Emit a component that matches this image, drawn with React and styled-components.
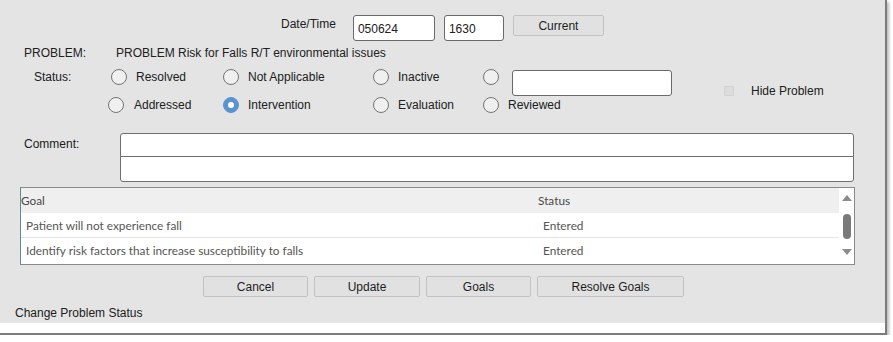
import React from 'react';
import styled, { createGlobalStyle } from 'styled-components';

const GlobalStyle = createGlobalStyle`
  html, body {
    margin: 0;
    padding: 0;
    background: #ffffff;
  }
  body {
    font-family: "Liberation Sans", Arial, sans-serif;
    font-size: 12px;
    color: #202020;
  }
`

const Window = styled.div`
  width: 885px;
  display: flex;
  flex-direction: column;
  border-right: 2px solid #7c7c7c;
  border-bottom: 2px solid #7c7c7c;
  box-shadow: 2px 2px 3px rgba(0, 0, 0, 0.28);
`

const Panel = styled.div`
  height: 323px;
  background: #e4e4e4;
  padding-top: 15px;
  box-sizing: border-box;
  display: flex;
  flex-direction: column;
`

const FooterStrip = styled.div`
  height: 10px;
  background: #ffffff;
`

const DateRow = styled.div`
  display: flex;
  align-items: flex-start;
  padding-left: 281px;
  height: 26px;
`

const Label = styled.span`
  line-height: 14px;
  margin-top: ${p => p.$top || 0}px;
  width: ${p => (p.$width ? `${p.$width}px` : 'auto')};
  flex-shrink: 0;
`

const TextBox = styled.div`
  box-sizing: border-box;
  width: ${p => p.$width}px;
  height: 26px;
  margin-left: ${p => p.$gap || 0}px;
  margin-top: ${p => p.$top || 0}px;
  background: #ffffff;
  border: 1px solid #6a6a6a;
  border-radius: 3px;
  padding: 6px 4px 0;
  line-height: 14px;
  font-size: 12px;
  flex-shrink: 0;
`

const Button = styled.div`
  box-sizing: border-box;
  width: ${p => p.$width}px;
  height: 21px;
  margin-left: ${p => p.$gap || 0}px;
  background: #e1e1e1;
  border: 1px solid #c2c2c2;
  border-radius: 2px;
  display: flex;
  align-items: center;
  justify-content: center;
  font-size: 12px;
  color: #1e1e1e;
  flex-shrink: 0;
`

const ProblemRow = styled.div`
  display: flex;
  padding-left: 24px;
  margin-top: 5px;
`

const StatusGrid = styled.div`
  display: grid;
  grid-template-columns: 111px 112px 150px 110px 241px auto;
  grid-template-rows: 28px 28px;
  margin-top: 3px;
`

const StatusLabel = styled.div`
  padding-left: 34px;
  display: flex;
  align-items: center;
`

const Option = styled.div`
  display: flex;
  align-items: center;
  gap: ${p => p.$gap || 9}px;
  margin-left: ${p => p.$shift || 0}px;
`

const Radio = styled.span`
  box-sizing: border-box;
  width: 16px;
  height: 16px;
  border-radius: 50%;
  border: 1px solid ${p => (p.$checked ? '#5a93cf' : '#747474')};
  background: ${p => (p.$checked ? '#5a93cf' : '#f0f0f0')};
  display: flex;
  align-items: center;
  justify-content: center;
  flex-shrink: 0;

  &::after {
    content: '';
    display: ${p => (p.$checked ? 'block' : 'none')};
    width: 6px;
    height: 6px;
    border-radius: 50%;
    background: #ffffff;
  }
`

const OtherCell = styled.div`
  display: flex;
  align-items: flex-start;
`

const HideCell = styled.div`
  grid-row: 1 / span 2;
  grid-column: 6;
  display: flex;
  align-items: center;
  gap: 17px;
`

const CheckBox = styled.span`
  width: 10px;
  height: 10px;
  box-sizing: border-box;
  background: #dcdcdc;
  border: 1px solid #d2d2d2;
  border-radius: 1px;
`

const CommentRow = styled.div`
  display: flex;
  padding-left: 24px;
  margin-top: 14px;
`

const CommentBoxes = styled.div`
  display: flex;
  flex-direction: column;
  width: 734px;
`

const CommentLine = styled.div`
  box-sizing: border-box;
  height: ${p => p.$height}px;
  margin-top: ${p => p.$top || 0}px;
  background: #ffffff;
  border: 1px solid #6e6e6e;
  border-radius: ${p => p.$radius};
`

const GoalTable = styled.div`
  box-sizing: border-box;
  width: 835px;
  height: 78px;
  margin: 5px 0 0 20px;
  border: 1px solid #8a8a8a;
  border-left-color: #5f8c94;
  background: #ffffff;
  display: flex;
  font-family: Lato, "Open Sans", sans-serif;
  font-size: 11.8px;
  color: #555555;
`

const TableBody = styled.div`
  flex: 1;
  display: flex;
  flex-direction: column;
`

const TableRow = styled.div`
  height: 25px;
  display: flex;
  align-items: center;
  background: ${p => (p.$head ? '#efefef' : '#ffffff')};
  border-bottom: ${p => (p.$line ? '1px solid #e6e6e6' : 'none')};
  box-sizing: border-box;
  color: ${p => (p.$head ? '#4a4a4a' : '#555555')};
`

const Cell = styled.div`
  width: ${p => (p.$width ? `${p.$width}px` : 'auto')};
  padding-left: ${p => p.$pad || 0}px;
  box-sizing: border-box;
  flex-shrink: 0;
`

const ScrollBar = styled.div`
  width: 15px;
  display: flex;
  flex-direction: column;
  align-items: center;
  background: #ffffff;
`

const Arrow = styled.span`
  width: 0;
  height: 0;
  border-left: 5px solid transparent;
  border-right: 5px solid transparent;
  ${p => (p.$down
    ? 'border-top: 6px solid #8c8c8c;'
    : 'border-bottom: 6px solid #8c8c8c;')}
  margin-top: ${p => p.$top}px;
`

const Thumb = styled.span`
  width: 8px;
  height: 25px;
  border-radius: 4px;
  background: #7a7a7a;
  margin-top: 13px;
`

const ButtonRow = styled.div`
  display: flex;
  padding-left: 203px;
  margin-top: 11px;
`

const StatusText = styled.div`
  padding-left: 15px;
  margin-top: 9px;
  line-height: 14px;
`

const goals = [
  { goal: 'Patient will not experience fall', status: 'Entered' },
  { goal: 'Identify risk factors that increase susceptibility to falls', status: 'Entered' },
];

export default function App() {
  return (
    <>
      <GlobalStyle />
      <Window>
        <Panel>
          <DateRow>
            <Label $top={2}>Date/Time</Label>
            <TextBox $width={82} $gap={17}>050624</TextBox>
            <TextBox $width={60} $gap={9}>1630</TextBox>
            <Button $width={91} $gap={9}>Current</Button>
          </DateRow>

          <ProblemRow>
            <Label $width={92}>PROBLEM:</Label>
            <Label>PROBLEM Risk for Falls R/T environmental issues</Label>
          </ProblemRow>

          <StatusGrid>
            <StatusLabel>Status:</StatusLabel>
            <Option><Radio />Resolved</Option>
            <Option><Radio />Not Applicable</Option>
            <Option><Radio />Inactive</Option>
            <OtherCell>
              <Radio style={{ marginTop: 6 }} />
              <TextBox $width={160} $gap={13} $top={7} />
            </OtherCell>
            <HideCell>
              <CheckBox />
              <span>Hide Problem</span>
            </HideCell>

            <div />
            <Option $shift={-3} $gap={10}><Radio />Addressed</Option>
            <Option><Radio $checked />Intervention</Option>
            <Option><Radio />Evaluation</Option>
            <Option><Radio />Reviewed</Option>
          </StatusGrid>

          <CommentRow>
            <Label $width={96} $top={4}>Comment:</Label>
            <CommentBoxes>
              <CommentLine $height={24} $radius="3px 3px 0 0" />
              <CommentLine $height={26} $top={-1} $radius="0 0 3px 3px" />
            </CommentBoxes>
          </CommentRow>

          <GoalTable>
            <TableBody>
              <TableRow $head>
                <Cell $width={517}>Goal</Cell>
                <Cell>Status</Cell>
              </TableRow>
              {goals.map((g, i) => (
                <TableRow key={i} $line={i === 0}>
                  <Cell $width={517} $pad={5}>{g.goal}</Cell>
                  <Cell $pad={5}>{g.status}</Cell>
                </TableRow>
              ))}
            </TableBody>
            <ScrollBar>
              <Arrow $top={7} />
              <Thumb />
              <Arrow $down $top={10} />
            </ScrollBar>
          </GoalTable>

          <ButtonRow>
            <Button $width={105}>Cancel</Button>
            <Button $width={106} $gap={6}>Update</Button>
            <Button $width={105} $gap={6}>Goals</Button>
            <Button $width={147} $gap={6}>Resolve Goals</Button>
          </ButtonRow>

          <StatusText>Change Problem Status</StatusText>
        </Panel>
        <FooterStrip />
      </Window>
    </>
  );
}
